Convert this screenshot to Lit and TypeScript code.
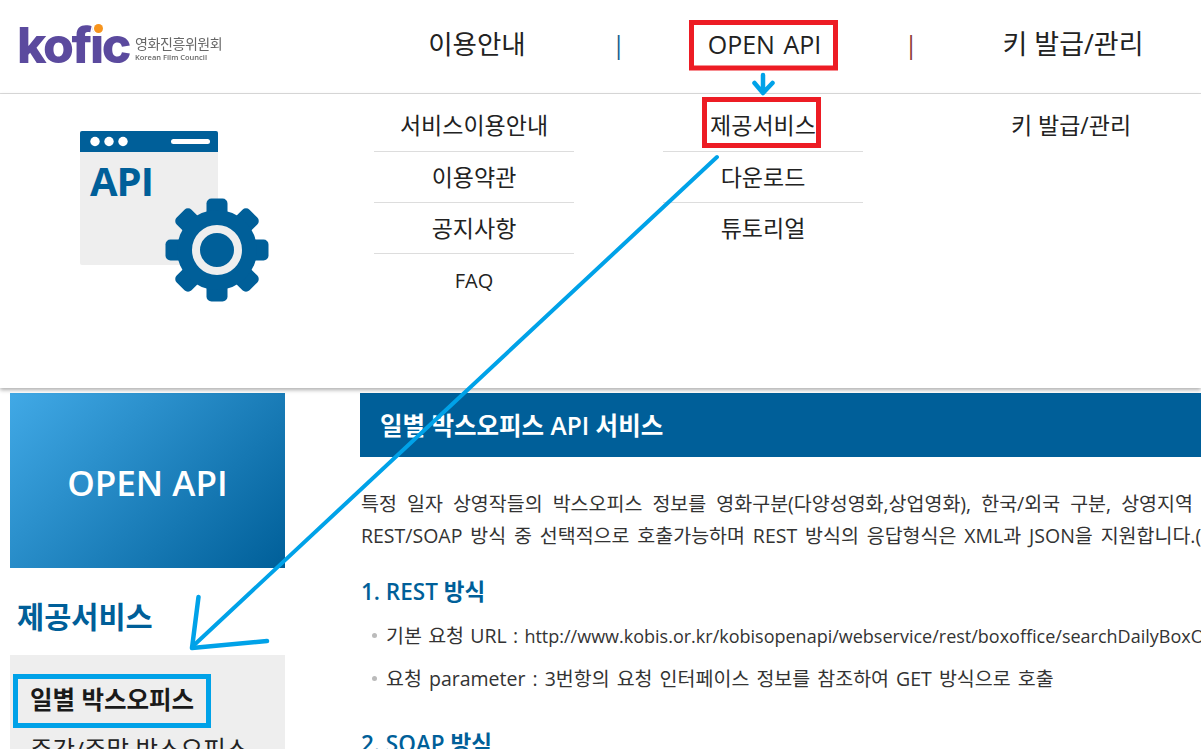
import { LitElement, html, css, svg } from "lit";
import { customElement } from "lit/decorators.js";

@customElement("app-root")
export class AppRoot extends LitElement {
  static styles = css`
    :host {
      display: block;
      position: relative;
      width: 1201px;
      height: 749px;
      overflow: hidden;
      background: #fff;
      font-family: "Open Sans", "Noto Sans CJK KR", sans-serif;
      color: #222;
    }
    .cols {
      display: grid;
      grid-template-columns: 374px 200px 89px 200px 96px 224px;
    }
    .topbar {
      height: 93px;
      border-bottom: 1px solid #ddd;
      align-items: center;
      box-sizing: content-box;
    }
    .logo {
      display: flex;
      align-items: center;
      gap: 6px;
      padding: 0 0 3px 17px;
      position: relative;
      filter: blur(0.35px);
    }
    .wordmark {
      font-family: "Inter", sans-serif;
      font-weight: 800;
      font-size: 50px;
      line-height: 40px;
      letter-spacing: -2.5px;
      color: #5b4a9e;
      position: relative;
    }
    .dot {
      position: absolute;
      left: 77px;
      top: -1px;
      width: 9px;
      height: 9px;
      border-radius: 50%;
      background: #f7941d;
      box-shadow: 0 0 0 1.5px #fff;
    }
    .logotext {
      display: flex;
      flex-direction: column;
      gap: 1px;
      color: #666;
      margin-top: 6px;
    }
    .logotext .ko { font-size: 14px; line-height: 18px; letter-spacing: -0.4px; font-family: "Noto Sans CJK KR", sans-serif; }
    .logotext .en { font-size: 7.5px; line-height: 9px; font-weight: 600; }
    .nav {
      font-size: 26.5px;
      text-align: center;
      line-height: 32px;
      white-space: nowrap;
      padding-bottom: 6px;
    }
    .nav.first { padding-left: 6px; }
    .nav.api { font-size: 25px; word-spacing: 2px; padding-left: 3px; }
    .nav.key { font-size: 27px; padding-left: 4px; }
    .sep { text-align: center; font-size: 25px; padding-bottom: 6px; line-height: 32px; }
    .sep.a { color: #1c5f8f; }
    .sep.b { color: #8c3a3a; }
    .panel {
      position: relative;
      z-index: 2;
      height: 294px;
      padding-top: 7px;
      box-sizing: border-box;
      background: #fff;
      box-shadow: 0 2px 4px rgba(0, 0, 0, 0.32);
    }
    .illus { padding: 30px 0 0 80px; }
    .illus svg { display: block; }
    .sub { display: flex; flex-direction: column; }
    .sub div {
      height: 51px;
      box-sizing: border-box;
      line-height: 49px;
      text-align: center;
      font-size: 23px;
      white-space: nowrap;
      border-bottom: 1px solid #ddd;
    }
    .sub div:nth-child(n + 2) { line-height: 51px; }
    .sub div:last-child { border-bottom: none; }
    .sub div.faq { font-size: 20px; line-height: 53px; }
    .body {
      display: grid;
      grid-template-columns: 275px 841px;
      column-gap: 75px;
      padding: 5px 0 0 10px;
    }
    .hero {
      height: 175px;
      background: linear-gradient(135deg, #41a9e6 0%, #005f99 100%);
      color: #fff;
      font-size: 35px;
      font-weight: 600;
      text-align: center;
      line-height: 180px;
    }
    .side h2 {
      margin: 0;
      padding: 30px 0 0 7px;
      height: 87px;
      box-sizing: border-box;
      font-size: 29.5px;
      line-height: 38px;
      font-weight: 700;
      color: #005f99;
    }
    .side ul {
      margin: 0;
      list-style: none;
      padding: 25px 0 0 20px;
      background: #eee;
      height: 200px;
      font-size: 24.5px;
      line-height: 40px;
      white-space: nowrap;
    }
    .side li { height: 50px; }
    .side li.on { font-weight: 600; color: #1a1a1a; }
    .main { min-width: 0; }
    .title {
      height: 64px;
      background: #005f99;
      color: #fff;
      font-size: 24.5px;
      font-weight: 600;
      line-height: 65px;
      padding-left: 20px;
    }
    .intro {
      margin: 31px 0 0;
      padding-left: 1px;
      font-size: 19.5px;
      line-height: 32px;
      white-space: nowrap;
      color: #333;
    }
    .intro span { display: block; word-spacing: 5px; }
    .intro span.tight { word-spacing: 2.8px; }
    .main h3 {
      margin: 26px 0 0 1px;
      font-size: 22.5px;
      line-height: 28px;
      font-weight: 600;
      color: #005f99;
    }
    .main h3.second { margin-top: 22px; }
    .main ul {
      margin: 16px 0 0;
      padding: 0 0 0 26px;
      list-style: none;
      font-size: 19.5px;
      line-height: 28px;
      white-space: nowrap;
      color: #333;
      word-spacing: 2px;
    }
    .main li { position: relative; height: 43px; }
    .main li.url { word-spacing: 1.2px; }
    .main li.url span { font-size: 18px; }
    .main li::before {
      content: "";
      position: absolute;
      left: -14px;
      top: 11px;
      width: 5px;
      height: 5px;
      border-radius: 50%;
      background: #bbb;
    }
    .overlay { position: absolute; left: 0; top: 0; z-index: 5; pointer-events: none; }
  `;

  private gear() {
    const teeth = [0, 45, 90, 135, 180, 225, 270, 315];
    return svg`
      <g transform="translate(137 119)">
        ${teeth.map(
          (a) => svg`<rect x="-10.5" y="-51.5" width="21" height="26" rx="5" fill="#005f99" transform="rotate(${a})"></rect>`
        )}
        <circle r="40" fill="#005f99"></circle>
        <circle r="21" fill="none" stroke="#eee" stroke-width="8"></circle>
      </g>`;
  }

  render() {
    return html`
      <div class="cols topbar">
        <div class="logo">
          <span class="wordmark">kofic<span class="dot"></span></span>
          <div class="logotext">
            <span class="ko">영화진흥위원회</span>
            <span class="en">Korean Film Council</span>
          </div>
        </div>
        <div class="nav first">이용안내</div>
        <div class="sep a">|</div>
        <div class="nav api">OPEN API</div>
        <div class="sep b">|</div>
        <div class="nav key">키 발급/관리</div>
      </div>
      <div class="cols panel">
        <div class="illus">
          <svg width="190" height="175" viewBox="0 0 190 175">
            <rect x="0" y="0" width="138" height="134" rx="2" fill="#eee"></rect>
            <path d="M0 21V2a2 2 0 0 1 2-2h134a2 2 0 0 1 2 2v19z" fill="#005f99"></path>
            <circle cx="15" cy="10.5" r="4.7" fill="#fff"></circle>
            <circle cx="29" cy="10.5" r="4.7" fill="#fff"></circle>
            <circle cx="43" cy="10.5" r="4.7" fill="#fff"></circle>
            <rect x="91" y="8" width="39" height="5" rx="2.5" fill="#fff"></rect>
            <text x="10" y="64.5" font-family="Open Sans, sans-serif" font-weight="700" font-size="40" letter-spacing="-1" fill="#005f99">API</text>
            ${this.gear()}
          </svg>
        </div>
        <div class="sub">
          <div>서비스이용안내</div>
          <div>이용약관</div>
          <div>공지사항</div>
          <div class="faq">FAQ</div>
        </div>
        <div></div>
        <div class="sub">
          <div>제공서비스</div>
          <div>다운로드</div>
          <div>튜토리얼</div>
        </div>
        <div></div>
        <div class="sub">
          <div>키 발급/관리</div>
        </div>
      </div>
      <div class="body">
        <div class="side">
          <div class="hero">OPEN API</div>
          <h2>제공서비스</h2>
          <ul>
            <li class="on">일별 박스오피스</li>
            <li>주간/주말 박스오피스</li>
          </ul>
        </div>
        <div class="main">
          <div class="title">일별 박스오피스 API 서비스</div>
          <p class="intro">
            <span>특정 일자 상영작들의 박스오피스 정보를 영화구분(다양성영화,상업영화), 한국/외국 구분, 상영지역</span>
            <span class="tight">REST/SOAP 방식 중 선택적으로 호출가능하며 REST 방식의 응답형식은 XML과 JSON을 지원합니다.(</span>
          </p>
          <h3>1. REST 방식</h3>
          <ul>
            <li class="url">기본 요청 URL : <span>http://www.kobis.or.kr/kobisopenapi/webservice/rest/boxoffice/searchDailyBoxOffice</span></li>
            <li>요청 parameter : 3번항의 요청 인터페이스 정보를 참조하여 GET 방식으로 호출</li>
          </ul>
          <h3 class="second">2. SOAP 방식</h3>
        </div>
      </div>
      <svg class="overlay" width="1201" height="749" viewBox="0 0 1201 749" fill="none">
        <rect x="691.5" y="22.5" width="144" height="45.5" stroke="#ed1c24" stroke-width="5"></rect>
        <rect x="704.5" y="99.5" width="114" height="46" stroke="#ed1c24" stroke-width="5"></rect>
        <rect x="15.5" y="676.5" width="193" height="49" stroke="#00a2e8" stroke-width="5"></rect>
        <g stroke="#00a2e8" stroke-linecap="round" stroke-linejoin="round">
          <path d="M763 75V93M754.5 83L763 93L772.5 83" stroke-width="4.5"></path>
          <path d="M717 157L192 647" stroke-width="4"></path>
          <path d="M198.5 597L192 648L267 641" stroke-width="4.5"></path>
        </g>
      </svg>
    `;
  }
}
